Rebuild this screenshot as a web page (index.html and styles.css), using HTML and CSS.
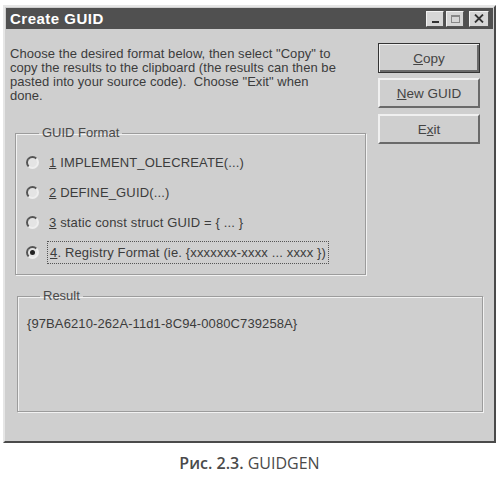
FILE: index.html
```html
<!DOCTYPE html>
<html lang="ru">
<head>
    <meta charset="UTF-8">
    <meta name="viewport" content="width=device-width, initial-scale=1.0">
    <title>GUIDGEN</title>
    <link rel="stylesheet" href="styles.css">
</head>
<body>
    <div class="page">
        <div class="dialog">
            <!-- заголовок окна -->
            <div class="titlebar">
                <span class="title">Create GUID</span>
                <div class="winbtns">
                    <a href="javascript:;" class="winbtn min"><span></span></a>
                    <a href="javascript:;" class="winbtn max"><span></span></a>
                    <a href="javascript:;" class="winbtn close">
                        <svg width="10" height="9" viewBox="0 0 10 9"><path d="M1 0.5 L9 8.5 M9 0.5 L1 8.5" stroke="#333" stroke-width="1.8"/></svg>
                    </a>
                </div>
            </div>
            <div class="content">
                <div class="top">
                    <div class="left">
                        <p class="hint">Choose the desired format below, then select "Copy" to<br>
                        copy the results to the clipboard (the results can then be<br>
                        pasted into your source code).&nbsp; Choose "Exit" when<br>
                        done.</p>
                        <fieldset class="group format">
                            <legend>GUID Format</legend>
                            <label class="opt"><span class="radio"></span><span class="txt"><u>1</u> IMPLEMENT_OLECREATE(...)</span></label>
                            <label class="opt"><span class="radio"></span><span class="txt"><u>2</u> DEFINE_GUID(...)</span></label>
                            <label class="opt"><span class="radio"></span><span class="txt"><u>3</u> static const struct GUID = { ... }</span></label>
                            <label class="opt on"><span class="radio"></span><span class="txt focus"><u>4</u>. Registry Format (ie. {xxxxxxx-xxxx ... xxxx })</span></label>
                        </fieldset>
                    </div>
                    <div class="buttons">
                        <a href="javascript:;" class="btn default"><u>C</u>opy</a>
                        <a href="javascript:;" class="btn"><u>N</u>ew GUID</a>
                        <a href="javascript:;" class="btn exit">E<u>x</u>it</a>
                    </div>
                </div>
                <fieldset class="group result">
                    <legend>Result</legend>
                    <div class="guid">{97BA6210-262A-11d1-8C94-0080C739258A}</div>
                </fieldset>
            </div>
        </div>
        <div class="caption"><b>Рис. 2.3.</b> GUIDGEN</div>
    </div>
</body>
</html>
```

FILE: styles.css
```css
body{
    margin: 0;
    background-color: #fff;
}
.page{
    padding: 5px 0 0 3px;
}
.dialog{
    width: 493px;
    height: 438px;
    box-sizing: border-box;
    padding: 1px;
    background-color: #cfcfcf;
    border: 2px solid;
    border-color: #e6e6e6 #4a4a4a #4a4a4a #e6e6e6;
    font-family: "Liberation Sans", Arial, sans-serif;
    font-size: 13px;
    color: #3c3c3c;
}
.titlebar{
    height: 21px;
    background-color: #505050;
    display: flex;
    align-items: center;
    justify-content: space-between;
    padding: 0 4px 0 4px;
}
.title{
    color: #fff;
    font-weight: bold;
    font-size: 15px;
    letter-spacing: 0.5px;
}
.winbtns{
    display: flex;
    align-items: center;
}
.winbtn{
    width: 18px;
    height: 16px;
    box-sizing: border-box;
    background-color: #d6d6d6;
    border: 1px solid;
    border-color: #f2f2f2 #555 #555 #f2f2f2;
    display: flex;
    align-items: center;
    justify-content: center;
    margin-left: 2px;
}
.winbtn.close{
    margin-left: 5px;
    width: 20px;
}
.winbtn.min span{
    width: 7px;
    height: 2px;
    background-color: #333;
    margin-top: 7px;
}
.winbtn.max span{
    width: 9px;
    height: 8px;
    box-sizing: border-box;
    border: 1px solid #888;
    border-top-width: 2px;
}
.content{
    padding: 14px 0 0 4px;
}
.top{
    display: flex;
}
.left{
    width: 356px;
}
.hint{
    margin: 4px 0 0 0;
    line-height: 14px;
    white-space: nowrap;
    letter-spacing: 0.05px;
}
.group{
    margin: 0;
    border: 1px solid #9c9c9c;
    box-shadow: 1px 1px 0 #f2f2f2, inset 1px 1px 0 #f2f2f2;
    min-width: 0;
}
.group legend{
    margin-left: 13px;
    padding: 0 3px;
    line-height: 14px;
    color: #4a4a4a;
}
.format{
    margin: 23px 0 0 5px;
    width: 351px;
    box-sizing: border-box;
    padding: 7px 0 7px 10px;
}
.opt{
    height: 30px;
    display: flex;
    align-items: center;
}
.radio{
    width: 13px;
    height: 13px;
    box-sizing: border-box;
    border-radius: 50%;
    border: 2px solid;
    border-color: #555 #eee #eee #555;
    background-color: #e4e4e4;
    margin-right: 8px;
    display: flex;
    align-items: center;
    justify-content: center;
}
.opt.on .radio::after{
    content: "";
    width: 5px;
    height: 5px;
    border-radius: 50%;
    background-color: #222;
}
.txt{
    padding: 3px 2px;
    white-space: nowrap;
    letter-spacing: 0.15px;
}
.txt.focus{
    border: 1px dotted #555;
}
.buttons{
    margin-left: 12px;
    display: flex;
    flex-direction: column;
    gap: 5px;
}
.btn{
    width: 102px;
    height: 30px;
    box-sizing: border-box;
    display: flex;
    align-items: center;
    justify-content: center;
    color: #444;
    text-decoration: none;
    border: 2px solid;
    border-color: #f0f0f0 #6a6a6a #6a6a6a #f0f0f0;
    font-size: 13.5px;
}
.btn.default{
    border: 1px solid #333;
    box-shadow: inset 1px 1px 0 #f0f0f0, inset -2px -2px 0 #6a6a6a;
}
.btn.exit{
    margin-top: 1px;
}
.result{
    margin: 14px 0 0 7px;
    width: 466px;
    height: 123px;
    box-sizing: border-box;
    padding: 14px 0 0 9px;
}
.guid{
    line-height: 14px;
    letter-spacing: 0.1px;
}
.caption{
    width: 493px;
    margin-top: 9px;
    text-align: center;
    font-family: "Open Sans", "DejaVu Sans", sans-serif;
    font-size: 16px;
    color: #4a4a4a;
}
.caption b{
    font-weight: 600;
}
```
